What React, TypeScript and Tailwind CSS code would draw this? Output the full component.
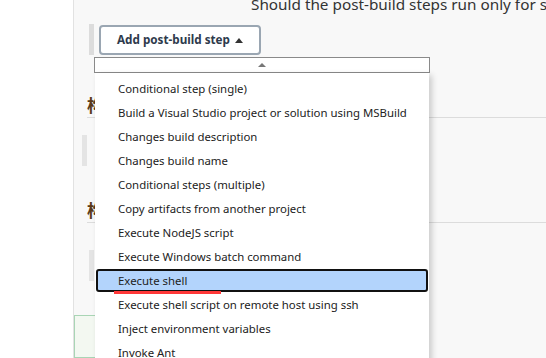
import React from "react";

const steps = [
  "Conditional step (single)",
  "Build a Visual Studio project or solution using MSBuild",
  "Changes build description",
  "Changes build name",
  "Conditional steps (multiple)",
  "Copy artifacts from another project",
  "Execute NodeJS script",
  "Execute Windows batch command",
  "Execute shell",
  "Execute shell script on remote host using ssh",
  "Inject environment variables",
  "Invoke Ant",
];

const font = { fontFamily: '"Noto Sans", "Open Sans", sans-serif' };
const cjk = { fontFamily: '"Noto Sans CJK SC", sans-serif' };

const App: React.FC = (): JSX.Element => {
  return (
    <div
      className="w-[546px] h-[358px] overflow-hidden flex bg-white text-[#333]"
      style={font}
    >
      <div className="w-[74px] shrink-0 bg-white border-r border-[#e2e2e2]" />
      <div className="relative flex-1 bg-[#f8f8f8] flex flex-col">
        {/* page content behind the menu */}
        <p className="text-[15.3px] leading-[18px] mt-[-5px] ml-[177px] whitespace-nowrap text-[#333]">
          Should the post-build steps run only for successful builds
        </p>
        <div className="flex mt-[11px] ml-[15px] h-[31px]">
          <div className="w-[5px] bg-[#dcdcdc]" />
          <button className="ml-[5px] mt-[1px] h-[30px] pl-[16px] pr-[16px] flex items-center gap-[5px] bg-white border-2 border-[#9aa6b2] rounded-[4px] text-[11.7px] font-bold text-[#2e3a4c]">
            Add post-build step
            <span className="w-0 h-0 border-l-[4px] border-r-[4px] border-b-[5px] border-l-transparent border-r-transparent border-b-[#333]" />
          </button>
        </div>
        <div className="mt-[37px] ml-[13px] border-b border-[#dcdcdc] h-[26px] flex items-center">
          <span className="text-[17px] font-bold text-[#5a3a1a]" style={cjk}>
            构建后操作
          </span>
        </div>
        <div className="ml-[8px] mt-[17px] w-[5px] h-[31px] bg-[#e4e4e4]" />
        <div className="mt-[32px] ml-[13px] border-b border-[#dcdcdc] h-[25px] flex items-center">
          <span className="text-[17px] font-bold text-[#5a3a1a]" style={cjk}>
            构建环境
          </span>
        </div>
        <div className="ml-[15px] mt-[27px] w-[5px] h-[31px] bg-[#e4e4e4]" />
        <div className="mt-[34px] w-[22px] flex-1 bg-[#f3f8f1] border border-[#a9d5b5]" />

        {/* dropdown menu */}
        <div className="absolute left-[20px] top-[57px] w-[336px] flex flex-col">
          <div className="h-[16px] bg-white border border-[#8a8a8a] flex items-center justify-center">
            <span className="w-0 h-0 border-l-[4px] border-r-[4px] border-b-[4px] border-l-transparent border-r-transparent border-b-[#777]" />
          </div>
          <ul className="bg-white ml-[1px] w-[334px] pt-[4px] shadow-[3px_2px_6px_rgba(0,0,0,0.18)] flex flex-col">
            {steps.map((s) =>
              s === "Execute shell" ? (
                <li
                  key={s}
                  className="relative h-[23px] mb-[1px] mx-[1px] bg-[#b3d4fc] border-2 border-[#111] rounded-[3px] flex items-center pl-[20px] text-[11.4px] text-[#222]"
                >
                  {s}
                  <span className="absolute z-10 left-[16px] bottom-[-4px] w-[107px] h-[3px] bg-[#ff3838]" />
                </li>
              ) : (
                <li
                  key={s}
                  className="h-[24px] flex items-center pl-[23px] text-[11.4px] text-[#222] whitespace-nowrap"
                >
                  {s}
                </li>
              )
            )}
          </ul>
        </div>
      </div>
    </div>
  );
};

export default App;
